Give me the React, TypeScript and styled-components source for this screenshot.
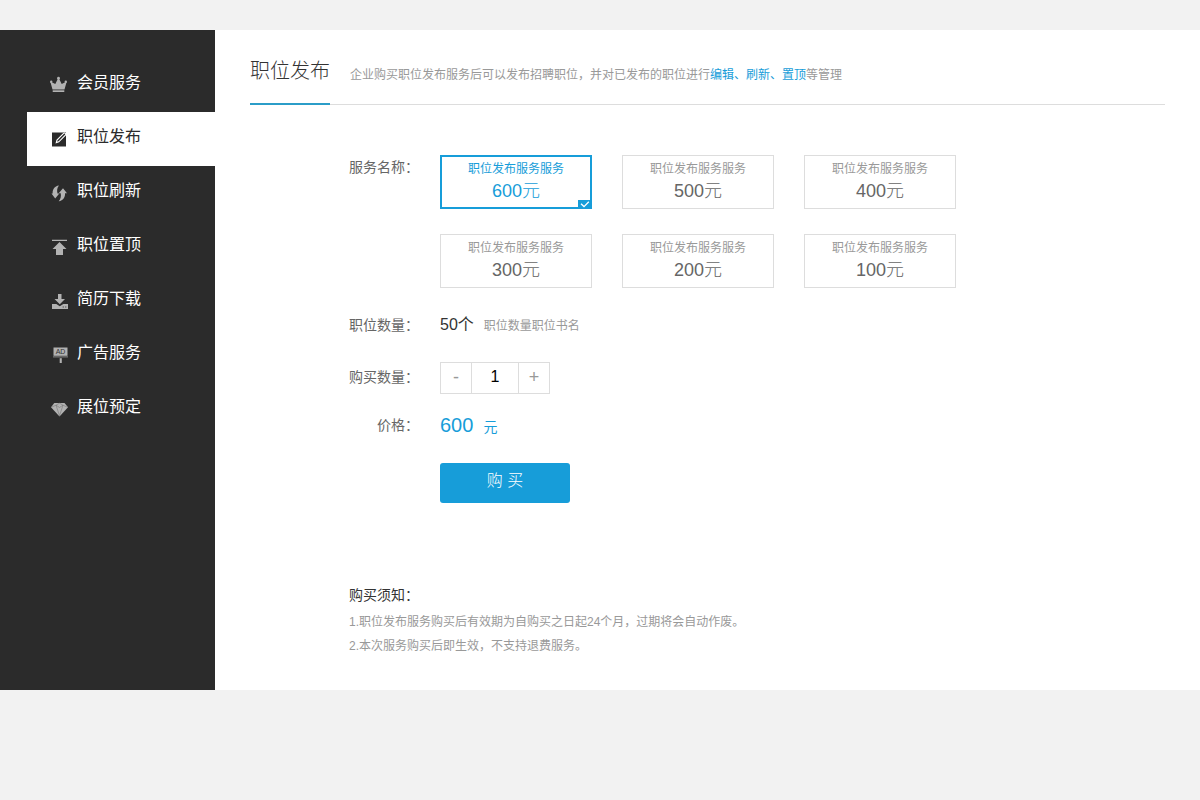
import React, { useState } from "react";
import styled, { createGlobalStyle, css } from "styled-components";

const blue = "#179dd9";

const GlobalStyle = createGlobalStyle`
  * { box-sizing: border-box; }
  body {
    margin: 0;
    background: #f2f2f2;
    color: #333;
    font-family: "Liberation Sans", "Noto Sans CJK SC", sans-serif;
    font-size: 14px;
    line-height: 24px;
  }
  button, input { font: inherit; }
  h1, h2, p, ol, ul { margin: 0; padding: 0; font-weight: inherit; }
`;

const Page = styled.div`
  display: flex;
  margin: 30px 0 110px;
  background: #fff;
`;

const Sidebar = styled.nav`
  flex: none;
  width: 215px;
  padding: 28px 0 0 27px;
  background: #2b2b2b;
`;

const NavLink = styled.a<{ $active: boolean }>`
  display: flex;
  align-items: center;
  gap: 9px;
  height: 54px;
  padding-left: 23px;
  font-size: 16px;
  text-decoration: none;
  color: ${(p) => (p.$active ? "#2b2b2b" : "#fff")};
  background: ${(p) => (p.$active ? "#fff" : "transparent")};

  svg {
    flex: none;
    color: ${(p) => (p.$active ? "#2b2b2b" : "#b2b2b2")};
  }
`;

const NavText = styled.span`
  padding-bottom: 4px;
`;

const Main = styled.main`
  flex: 1;
  min-width: 0;
  padding: 0 35px 32px;
`;

const Header = styled.header`
  display: flex;
  gap: 20px;
  height: 75px;
  border-bottom: 1px solid #ddd;
`;

const Title = styled.h1`
  flex: none;
  height: 75px;
  padding-top: 29px;
  border-bottom: 2px solid #2b9dc8;
  font-size: 20px;
  font-weight: 300;
`;

const Summary = styled.p`
  padding-top: 33px;
  font-size: 12px;
  color: #999;
`;

const TextLink = styled.a`
  color: ${blue};
  text-decoration: none;
`;

const Form = styled.form`
  padding: 50px 0 0 99px;
`;

const Row = styled.div<{ $gap?: number }>`
  display: flex;
  align-items: center;
  gap: 21px;
  margin-top: ${(p) => p.$gap ?? 0}px;
`;

const TopRow = styled(Row)`
  align-items: flex-start;
`;

const labelStyle = css`
  flex: none;
  width: 70px;
  padding-bottom: 2px;
  text-align: right;
  color: #666;
`;

const RowTitle = styled.span`
  ${labelStyle}
`;

const RowLabel = styled.label`
  ${labelStyle}
`;

const Options = styled.div`
  flex: 1;
  display: grid;
  grid-template-columns: repeat(auto-fill, 152px);
  gap: 25px 30px;
  max-width: 516px;
`;

const Option = styled.label<{ $active: boolean }>`
  position: relative;
  display: flex;
  flex-direction: column;
  align-items: center;
  height: 54px;
  padding-top: ${(p) => (p.$active ? 2 : 3)}px;
  border: ${(p) => (p.$active ? `2px solid ${blue}` : "1px solid #ddd")};
  color: ${(p) => (p.$active ? blue : "#666")};
  cursor: pointer;
`;

const OptionRadio = styled.input`
  position: absolute;
  inset: 0;
  margin: 0;
  opacity: 0;
`;

const OptionName = styled.span<{ $active: boolean }>`
  font-size: 12px;
  line-height: 20px;
  color: ${(p) => (p.$active ? blue : "#999")};
`;

const OptionPrice = styled.span`
  font-size: 18px;
  font-weight: 300;
`;

const Tick = styled.svg`
  position: absolute;
  right: -2px;
  bottom: -2px;
`;

const Count = styled.span`
  font-size: 16px;
`;

const Hint = styled.span`
  font-size: 12px;
  color: #999;
`;

const Value = styled.div`
  display: flex;
  align-items: baseline;
  gap: 10px;
  height: 26px;
`;

const Stepper = styled.div`
  display: flex;
  height: 32px;
  border: 1px solid #ddd;
`;

const StepButton = styled.button`
  width: 30px;
  padding: 0 0 3px;
  border: 0;
  background: #fff;
  color: #999;
  font-size: 18px;
  line-height: 24px;
`;

const Quantity = styled.input`
  width: 48px;
  padding: 0 0 2px;
  border: solid #ddd;
  border-width: 0 1px;
  text-align: center;
  font-size: 16px;
  color: #000;
`;

const Price = styled.div`
  display: flex;
  align-items: baseline;
  gap: 10px;
  height: 28px;
  line-height: 26px;
  color: ${blue};
`;

const Amount = styled.span`
  font-size: 20px;
`;

const BuyButton = styled.button`
  width: 130px;
  height: 40px;
  margin: 23px 0 0 91px;
  padding: 0 0 5px;
  border: 0;
  border-radius: 3px;
  background: ${blue};
  color: #fff;
  font-size: 16px;
  font-weight: 300;
`;

const Notice = styled.section`
  padding: 80px 0 0 99px;
`;

const NoticeTitle = styled.h2`
  margin-bottom: 3px;
  font-size: 14px;
`;

const NoticeList = styled.ul`
  list-style: none;
  font-size: 12px;
  color: #999;
`;

const Icon = ({ children }: { children: React.ReactNode }) => (
  <svg width="18" height="18" viewBox="0 0 18 18" fill="currentColor" aria-hidden="true">
    {children}
  </svg>
);

const crown = (
  <Icon>
    <path d="M.3 5.500 5.300 8 8.500 1.500 11.700 8l5-2.500-2.200 8H2.500z" />
    <circle cx="1.200" cy="5.800" r="1.200" />
    <circle cx="8.500" cy="2.200" r="1.400" />
    <circle cx="15.800" cy="5.800" r="1.200" />
    <path d="M2.700 14.300h11.600V16H2.700z" />
  </Icon>
);

const edit = (
  <Icon>
    <path d="M2 2.500h14v14H2z" />
    <path d="M6.300 12.600 7 10l6.600-6.600c1.400-1 2.700.3 1.800 1.700L8.800 11.800z" fill="none" stroke="#fff" strokeWidth="1.100" />
  </Icon>
);

const refresh = (
  <Icon>
    <path d="M9 1.500C4.500 2 2.300 5.600 2.700 9.500H1.500L5.200 14.500l4.100-5H7.500C6.800 6.400 7 3.700 9 1.500z" />
    <path d="M8.700 17.200c4.500-.5 6.700-4.100 6.300-8h2L13 4.200 8.700 9.200h2c.6 3.100 0 5.800-2 8z" />
  </Icon>
);

const toTop = (
  <Icon>
    <path d="M2 1.800h15V3H2zM9.500 4l7 7H13v6H6v-6H2.500z" />
  </Icon>
);

const download = (
  <Icon>
    <path d="M8 2h3.500v5H15l-5.200 5.200L4.500 7H8z" />
    <path d="M2 12h4.300l3.500 2.300 3.500-2.300H18v5H2z" />
    <path d="M12.600 14.400H14v1.200h-1.400zM15 14.400h1.400v1.200H15z" fill="#555" />
  </Icon>
);

const billboard = (
  <Icon>
    <path d="M3.500 1.500h14v8.300h-14z" />
    <path d="M3 10.200h15v1.300H3z" fill="#777" />
    <path d="M9.700 12.200h2.100V17H9.700z" />
    <text x="10.500" y="8.200" fontSize="7" textAnchor="middle" fill="#333">
      AD
    </text>
  </Icon>
);

const diamond = (
  <Icon>
    <path d="M4.300 3h10.200L18 7.200 9.500 16.500 1 7.200z" />
    <path d="m1.500 7.200 4.500-2 3.500 2.300 3.500-2.300 4.500 2M6 5.200l3.500 10.500L13 5.200M6 5.200l3.500-2 3.500 2" fill="none" stroke="#777" strokeWidth="0.600" />
  </Icon>
);

const navItems = [
  { text: "会员服务", icon: crown },
  { text: "职位发布", icon: edit },
  { text: "职位刷新", icon: refresh },
  { text: "职位置顶", icon: toTop },
  { text: "简历下载", icon: download },
  { text: "广告服务", icon: billboard },
  { text: "展位预定", icon: diamond },
];

const prices = [600, 500, 400, 300, 200, 100];

export default function App() {
  const [price, setPrice] = useState(600);
  const [quantity, setQuantity] = useState(1);

  return (
    <>
      <GlobalStyle />
      <Page>
        <Sidebar>
          {navItems.map(({ text, icon }) => (
            <NavLink key={text} href="#" $active={text === "职位发布"}>
              {icon}
              <NavText>{text}</NavText>
            </NavLink>
          ))}
        </Sidebar>
        <Main>
          <Header>
            <Title>职位发布</Title>
            <Summary>
              企业购买职位发布服务后可以发布招聘职位，并对已发布的职位进行
              <TextLink href="#">编辑</TextLink>
              <TextLink as="span">、</TextLink>
              <TextLink href="#">刷新</TextLink>
              <TextLink as="span">、</TextLink>
              <TextLink href="#">置顶</TextLink>
              等管理
            </Summary>
          </Header>

          <Form onSubmit={(e) => e.preventDefault()}>
            <TopRow>
              <RowTitle id="service">服务名称：</RowTitle>
              <Options role="radiogroup" aria-labelledby="service">
                {prices.map((value) => {
                  const active = value === price;
                  return (
                    <Option key={value} $active={active}>
                      <OptionRadio
                        type="radio"
                        name="service"
                        value={value}
                        checked={active}
                        onChange={() => setPrice(value)}
                      />
                      <OptionName $active={active}>职位发布服务服务</OptionName>
                      <OptionPrice>{value}元</OptionPrice>
                      {active && (
                        <Tick width="14" height="9" viewBox="0 0 14 9" aria-hidden="true">
                          <path d="M0 0h14v9H0z" fill={blue} />
                          <path d="M3 3.800 6 6.600l4.800-4.900" fill="none" stroke="#fff" strokeWidth="1.300" />
                        </Tick>
                      )}
                    </Option>
                  );
                })}
              </Options>
            </TopRow>

            <Row $gap={25}>
              <RowTitle>职位数量：</RowTitle>
              <Value>
                <Count>50个</Count>
                <Hint>职位数量职位书名</Hint>
              </Value>
            </Row>

            <Row $gap={23}>
              <RowLabel htmlFor="quantity">购买数量：</RowLabel>
              <Stepper>
                <StepButton type="button" onClick={() => setQuantity(Math.max(1, quantity - 1))}>
                  -
                </StepButton>
                <Quantity
                  id="quantity"
                  value={quantity}
                  onChange={(e) => setQuantity(Number(e.target.value) || 1)}
                />
                <StepButton type="button" onClick={() => setQuantity(quantity + 1)}>
                  +
                </StepButton>
              </Stepper>
            </Row>

            <Row $gap={18}>
              <RowTitle>价格：</RowTitle>
              <Price>
                <Amount>{price * quantity}</Amount>
                <span>元</span>
              </Price>
            </Row>

            <BuyButton type="submit">购 买</BuyButton>
          </Form>

          <Notice>
            <NoticeTitle>购买须知：</NoticeTitle>
            <NoticeList>
              <li>1.职位发布服务购买后有效期为自购买之日起24个月，过期将会自动作废。</li>
              <li>2.本次服务购买后即生效，不支持退费服务。</li>
            </NoticeList>
          </Notice>
        </Main>
      </Page>
    </>
  );
}
